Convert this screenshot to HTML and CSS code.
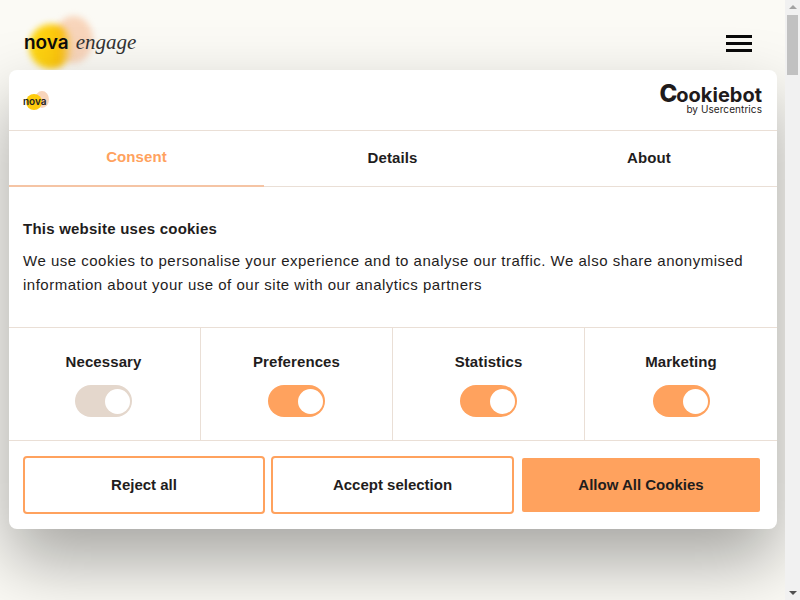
FILE: index.html
```html
<!doctype html>
<html lang="en">
  <head>
    <meta charset="UTF-8" />
    <title>Nova Engage</title>
    <link rel="stylesheet" href="styles.css">
  </head>
  <body>
    <div class="page">
      <header class="site-header">
        <div class="brand">
          <span class="blob blob-peach"></span>
          <span class="blob blob-yellow"></span>
          <span class="brand-nova">nova</span>
          <span class="brand-engage">engage</span>
        </div>
        <div class="burger"><span></span><span></span><span></span></div>
      </header>
    </div>

    <div class="scrollbar">
      <span class="arrow arrow-up"></span>
      <div class="track"><div class="thumb"></div></div>
      <span class="arrow arrow-down"></span>
    </div>

    <!-- Consent dialog -->
    <div class="dialog">
      <div class="dialog-top">
        <div class="mini-brand">
          <span class="mini-blob mini-peach"></span>
          <span class="mini-blob mini-yellow"></span>
          <span class="mini-nova">nova</span>
        </div>
        <div class="cookiebot">
          <div class="cb-name"><span class="cb-c">C</span>ookiebot</div>
          <div class="cb-by">by Usercentrics</div>
        </div>
      </div>

      <nav class="tabs">
        <div class="tab active">Consent</div>
        <div class="tab">Details</div>
        <div class="tab">About</div>
      </nav>

      <div class="content">
        <h2>This website uses cookies</h2>
        <p>We use cookies to personalise your experience and to analyse our traffic. We also share anonymised information about your use of our site with our analytics partners</p>
      </div>

      <div class="toggles">
        <div class="toggle-cell">
          <strong>Necessary</strong>
          <span class="switch locked"><span class="knob"></span></span>
        </div>
        <div class="toggle-cell">
          <strong>Preferences</strong>
          <span class="switch"><span class="knob"></span></span>
        </div>
        <div class="toggle-cell">
          <strong>Statistics</strong>
          <span class="switch"><span class="knob"></span></span>
        </div>
        <div class="toggle-cell">
          <strong>Marketing</strong>
          <span class="switch"><span class="knob"></span></span>
        </div>
      </div>

      <div class="actions">
        <button>Reject all</button>
        <button>Accept selection</button>
        <button class="primary">Allow All Cookies</button>
      </div>
    </div>
  </body>
</html>
```

FILE: styles.css
```css
html,
body {
  height: 100%;
}

body {
  margin: 0;
  display: flex;
  height: 600px;
  overflow: hidden;
  font-family: "Liberation Sans", Arial, sans-serif;
  color: #1f1d1d;
  background: #fbfaf5;
}

.page {
  flex: 1;
  background: #fbfaf5;
}

.site-header {
  display: flex;
  justify-content: space-between;
  align-items: flex-start;
  padding: 0 33px 0 24px;
}

.brand {
  position: relative;
  width: 120px;
  height: 70px;
  display: flex;
  align-items: baseline;
  gap: 7px;
  padding-top: 30px;
  box-sizing: border-box;
}

.blob {
  position: absolute;
  border-radius: 50%;
  filter: blur(3px);
}

.blob-peach {
  left: 30px;
  top: 16px;
  width: 39px;
  height: 47px;
  background: #f8d5bb;
}

.blob-yellow {
  left: 5px;
  top: 24px;
  width: 44px;
  height: 45px;
  background: linear-gradient(90deg, #ffd912 0, #fdcb0e 55%, #f9bd0a 72%, rgba(248, 200, 120, 0) 100%);
}

.brand-nova {
  position: relative;
  font-family: Inter, sans-serif;
  font-size: 19px;
  font-weight: 600;
  color: #0c0c0c;
}

.brand-engage {
  position: relative;
  font-family: "Liberation Serif", serif;
  font-style: italic;
  font-size: 21px;
  color: #333;
}

.burger {
  display: flex;
  flex-direction: column;
  gap: 4px;
  margin-top: 35px;
}

.burger span {
  display: block;
  width: 26px;
  height: 3px;
  background: #0a0a0a;
}

/* fake scrollbar, always visible in the shot */
.scrollbar {
  position: relative;
  z-index: 2;
  width: 15px;
  display: flex;
  flex-direction: column;
  align-items: center;
  background: #f1f1f1;
}

.track {
  flex: 1;
  width: 100%;
  padding: 0 2px;
  box-sizing: border-box;
}

.thumb {
  height: 60px;
  background: #c1c1c1;
}

.arrow {
  width: 15px;
  height: 15px;
  flex: none;
  position: relative;
}

.arrow::after {
  content: "";
  position: absolute;
  left: 4px;
  border-left: 4px solid transparent;
  border-right: 4px solid transparent;
}

.arrow-up::after {
  top: 5px;
  border-bottom: 4px solid #a3a3a3;
}

.arrow-down::after {
  top: 6px;
  border-top: 4px solid #505050;
}

.dialog {
  position: absolute;
  left: 9px;
  top: 70px;
  width: 768px;
  height: 459px;
  background: #fff;
  border-radius: 8px;
  box-shadow: 0 32px 68px rgba(0, 0, 0, 0.34);
  display: flex;
  flex-direction: column;
}

.dialog-top {
  height: 60px;
  display: flex;
  justify-content: space-between;
  align-items: flex-start;
  padding: 0 15px 0 14px;
  border-bottom: 1px solid #eadfd6;
}

.mini-brand {
  position: relative;
  width: 26px;
  height: 22px;
  margin-top: 20px;
}

.mini-blob {
  position: absolute;
  border-radius: 50%;
  filter: blur(0.6px);
}

.mini-peach {
  left: 12px;
  top: 1px;
  width: 14px;
  height: 17px;
  background: #f8d5bb;
}

.mini-yellow {
  left: 3px;
  top: 4px;
  width: 16px;
  height: 16px;
  background: #fdcb0e;
}

.mini-nova {
  position: absolute;
  left: 0;
  top: 5px;
  font-family: Inter, sans-serif;
  font-size: 10px;
  font-weight: 600;
  color: #222;
}

.cookiebot {
  margin-top: 14px;
  text-align: right;
  color: #1f1b1b;
}

.cb-name {
  font-family: Inter, sans-serif;
  font-size: 20px;
  font-weight: 700;
  line-height: 20px;
  height: 20px;
}

.cb-c {
  font-size: 24px;
  font-weight: 800;
  line-height: 20px;
  letter-spacing: -1px;
}

.cb-by {
  font-family: Inter, sans-serif;
  font-size: 10px;
  line-height: 10px;
  letter-spacing: 0.07px;
}

.tabs {
  display: grid;
  grid-template-columns: 255px 257px 1fr;
  height: 55px;
  border-bottom: 1px solid #eadfd6;
}

.tab {
  display: flex;
  justify-content: center;
  align-items: center;
  padding-bottom: 4px;
  font-size: 15px;
  font-weight: 700;
  letter-spacing: 0.1px;
}

.tab.active {
  color: #ffa25e;
  height: 56px;
  box-sizing: border-box;
  padding-bottom: 3px;
  border-bottom: 2px solid #f5c4a4;
}

.content {
  height: 141px;
  box-sizing: border-box;
  padding: 32px 14px 0;
  border-bottom: 1px solid #eadfd6;
}

.content h2 {
  margin: 0 0 10px;
  font-size: 15px;
  line-height: 20px;
  font-weight: 700;
  letter-spacing: 0.23px;
}

.content p {
  margin: 0;
  font-size: 15px;
  line-height: 24px;
  letter-spacing: 0.5px;
}

.toggles {
  display: grid;
  grid-template-columns: 191px 192px 192px 1fr;
  height: 112px;
  border-bottom: 1px solid #eadfd6;
}

.toggle-cell {
  display: flex;
  flex-direction: column;
  align-items: center;
  padding-top: 24px;
  border-left: 1px solid #eadfd6;
}

.toggle-cell:first-child {
  border-left: 0;
  padding-right: 2px;
}

.toggle-cell strong {
  font-size: 15px;
  line-height: 20px;
  letter-spacing: 0.1px;
}

.switch {
  margin-top: 13px;
  width: 57px;
  height: 32px;
  border-radius: 16px;
  background: #ffa25e;
  display: flex;
  justify-content: flex-end;
  align-items: center;
  padding-right: 2px;
  box-sizing: border-box;
}

.switch.locked {
  background: #e4d7cc;
}

.knob {
  width: 25px;
  height: 25px;
  border-radius: 50%;
  background: #fff;
}

.actions {
  flex: 1;
  display: grid;
  grid-template-columns: 242px 243px 1fr;
  gap: 6px;
  padding: 15px 15px 15px 14px;
}

.actions button {
  padding: 0 0 2px;
  font-family: inherit;
  font-size: 15px;
  font-weight: 700;
  color: #1f1d1d;
  background: #fff;
  border: 2px solid #ffa25e;
  border-radius: 4px;
}

.actions button.primary {
  background: #ffa25e;
  border-color: #fff;
}
```
